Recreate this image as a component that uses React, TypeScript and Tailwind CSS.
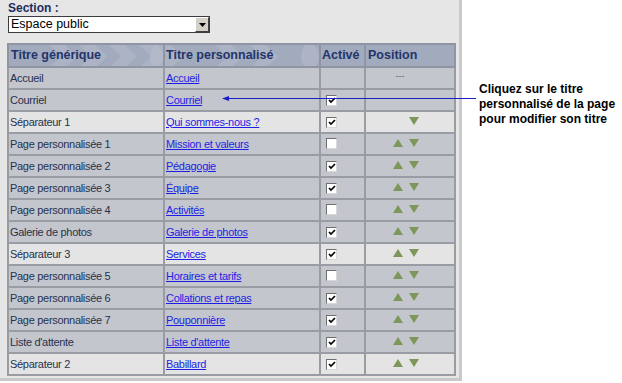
import React from 'react'

type Pos = 'dash' | 'down' | 'both'

interface Row {
  generic: string
  custom: string
  active: boolean | null
  pos: Pos
  sep?: boolean
}

const ROWS: Row[] = [
  { generic: 'Accueil', custom: 'Accueil', active: null, pos: 'dash' },
  { generic: 'Courriel', custom: 'Courriel', active: true, pos: 'dash' },
  { generic: 'Séparateur 1', custom: 'Qui sommes-nous ?', active: true, pos: 'down', sep: true },
  { generic: 'Page personnalisée 1', custom: 'Mission et valeurs', active: false, pos: 'both' },
  { generic: 'Page personnalisée 2', custom: 'Pédagogie', active: true, pos: 'both' },
  { generic: 'Page personnalisée 3', custom: 'Équipe', active: true, pos: 'both' },
  { generic: 'Page personnalisée 4', custom: 'Activités', active: false, pos: 'both' },
  { generic: 'Galerie de photos', custom: 'Galerie de photos', active: true, pos: 'both' },
  { generic: 'Séparateur 3', custom: 'Services', active: true, pos: 'both', sep: true },
  { generic: 'Page personnalisée 5', custom: 'Horaires et tarifs', active: false, pos: 'both' },
  { generic: 'Page personnalisée 6', custom: 'Collations et repas', active: true, pos: 'both' },
  { generic: 'Page personnalisée 7', custom: 'Pouponnière', active: true, pos: 'both' },
  { generic: "Liste d'attente", custom: "Liste d'attente", active: true, pos: 'both' },
  { generic: 'Séparateur 2', custom: 'Babillard', active: true, pos: 'both', sep: true },
]

function Checkbox({ checked }: { checked: boolean }) {
  return (
    <span className="inline-flex w-[11px] h-[11px] bg-white border border-t-[#6f6f6f] border-l-[#6f6f6f] border-b-[#d8d8d8] border-r-[#d8d8d8] items-center justify-center">
      {checked && (
        <svg width="8" height="7" viewBox="0 0 8 7">
          <path d="M1 3 L3 5 L7 1" stroke="#000" strokeWidth="1.7" fill="none" />
        </svg>
      )}
    </span>
  )
}

function Arrow({ dir, hidden }: { dir: 'up' | 'down'; hidden?: boolean }) {
  return (
    <svg width="10" height="8" viewBox="0 0 10 8" className={hidden ? 'invisible' : ''}>
      {dir === 'up' ? <polygon points="5,0 10,8 0,8" fill="#7d9659" /> : <polygon points="0,0 10,0 5,8" fill="#7d9659" />}
    </svg>
  )
}

function Chevrons({ xs, w, round }: { xs: number[]; w: number; round: number[] }) {
  // faint chevron strip behind the column titles
  return (
    <svg className="absolute inset-0 pointer-events-none" width={w} height="23" viewBox={`0 0 ${w} 23`}>
      {xs.map((x, i) => (
        <polygon key={i} points={`${x},0 ${x + 16},0 ${x + 28},11.5 ${x + 16},23 ${x},23 ${x + 12},11.5`} fill="#b9bfcd" opacity="0.45" />
      ))}
      {round.map((x, i) => (
        <ellipse key={i} cx={x} cy="11.5" rx="9" ry="13" fill="#bcc1cf" opacity="0.45" />
      ))}
    </svg>
  )
}

export default function App() {
  return (
    <div className="relative w-[622px] h-[383px] bg-white font-['Liberation_Sans',Arial,sans-serif]">
      {/* panel */}
      <div className="w-[462px] h-[381px] border-r-[3px] border-b-[3px] border-[#c9c9c9]">
        <div className="w-[459px] h-[378px] bg-[#e6e6e6] pt-[2px] pl-[7px]">
          <div className="pl-[1px] text-[12px] font-bold text-[#1d2d5e] leading-[13px]">Section :</div>
          <div className="ml-[1px] mt-[1px] w-[202px] h-[17px] bg-white border border-[#3c3c3c] flex items-center">
            <span className="flex-1 pl-[2px] text-[12.5px] text-black leading-none">Espace public</span>
            <span className="w-[14px] h-[15px] bg-[#d4d0c8] border border-t-white border-l-white border-b-[#404040] border-r-[#404040] flex items-center justify-center">
              <svg width="7" height="4" viewBox="0 0 7 4">
                <polygon points="0,0 7,0 3.5,4" fill="#000" />
              </svg>
            </span>
          </div>

          <table className="mt-[10px] w-[447px] border-collapse table-fixed text-[11px] leading-none tracking-[-0.3px]">
            <colgroup>
              <col className="w-[156px]" />
              <col className="w-[156px]" />
              <col className="w-[45px]" />
              <col className="w-[90px]" />
            </colgroup>
            <thead>
              <tr className="h-[23px] bg-[#a2aabd] text-[12.5px] font-bold text-[#22356b] tracking-normal">
                <th className="relative border-2 border-[#8f95a3] text-left pl-[2px] p-0 overflow-hidden">
                  <Chevrons xs={[40, 70, 100, 130]} w={156} round={[150]} />
                  <span className="relative">Titre générique</span>
                </th>
                <th className="relative border-2 border-[#8f95a3] text-left pl-[1px] p-0 overflow-hidden">
                  <Chevrons xs={[-10, 50, 85]} w={156} round={[145]} />
                  <span className="relative">Titre personnalisé</span>
                </th>
                <th className="border-2 border-[#8f95a3] text-left pl-[1px] p-0">Activé</th>
                <th className="border-2 border-[#8f95a3] text-left pl-[2px] p-0">Position</th>
              </tr>
            </thead>
            <tbody>
              {ROWS.map((r, i) => (
                <tr key={i} className={`h-[22px] ${r.sep ? 'bg-[#e4e4e4]' : 'bg-[#c4c6cd]'} text-[#26324d]`}>
                  <td className="border-2 border-[#9a9ca3] pl-[1px] p-0">{r.generic}</td>
                  <td className="border-2 border-[#9a9ca3] pl-[1px] p-0">
                    <a href="#" className="text-[#1e1ee6] underline">
                      {r.custom}
                    </a>
                  </td>
                  <td className="border-2 border-[#9a9ca3] pl-[5px] p-0 align-middle">
                    {r.active !== null && <Checkbox checked={r.active} />}
                  </td>
                  <td className="border-2 border-[#9a9ca3] p-0">
                    {r.pos === 'dash' ? (
                      <div className="text-center text-[9px] tracking-normal text-[#666] pr-[20px] pb-[3px]">---</div>
                    ) : (
                      <div className="flex justify-center gap-[6px] pr-[8px] pb-[3px]">
                        <Arrow dir="up" hidden={r.pos === 'down'} />
                        <Arrow dir="down" />
                      </div>
                    )}
                  </td>
                </tr>
              ))}
            </tbody>
          </table>
        </div>
      </div>

      {/* annotation */}
      <svg className="absolute left-[220px] top-[94px]" width="260" height="9" viewBox="0 0 260 9">
        <line x1="4" y1="4.5" x2="256" y2="4.5" stroke="#1c1cc8" strokeWidth="1" />
        <polygon points="2,4.5 9,2 9,7" fill="#1c1cc8" />
      </svg>
      <div className="absolute left-[479px] top-[82px] text-[12px] font-bold text-black leading-[15px]">
        Cliquez sur le titre
        <br />
        personnalisé de la page
        <br />
        pour modifier son titre
      </div>
    </div>
  )
}
